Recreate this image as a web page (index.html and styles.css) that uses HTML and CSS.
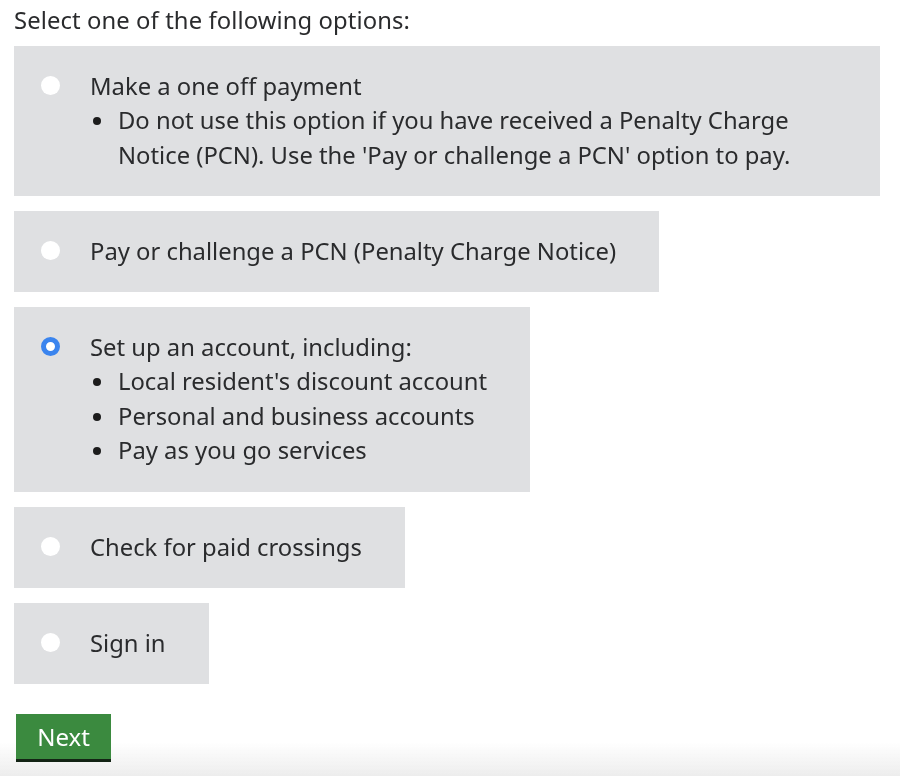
FILE: index.html
```html
<!DOCTYPE html>
<html lang="en">
<head>
<meta charset="utf-8">
<title>Select an option</title>
<link rel="stylesheet" href="styles.css">
</head>
<body>
<main class="page">
  <p class="legend">Select one of the following options:</p>
  <div class="options">
    <label class="option option-wide">
      <span class="radio"></span>
      <span class="body">
        <span class="title">Make a one off payment</span>
        <ul class="bullets">
          <li>Do not use this option if you have received a Penalty Charge Notice (PCN). Use the 'Pay or challenge a PCN' option to pay.</li>
        </ul>
      </span>
    </label>
    <label class="option">
      <span class="radio"></span>
      <span class="body"><span class="title">Pay or challenge a PCN (Penalty Charge Notice)</span></span>
    </label>
    <label class="option">
      <span class="radio checked"></span>
      <span class="body">
        <span class="title">Set up an account, including:</span>
        <ul class="bullets">
          <li>Local resident's discount account</li>
          <li>Personal and business accounts</li>
          <li>Pay as you go services</li>
        </ul>
      </span>
    </label>
    <label class="option">
      <span class="radio"></span>
      <span class="body"><span class="title">Check for paid crossings</span></span>
    </label>
    <label class="option">
      <span class="radio"></span>
      <span class="body"><span class="title">Sign in</span></span>
    </label>
  </div>
  <button class="next" type="button">Next</button>
</main>
<div class="fade"></div>
</body>
</html>
```
FILE: styles.css
```css
* { box-sizing: border-box; }
html { margin: 0; padding: 0; background: #fff; }
body {
  margin: 0;
  padding: 0;
  background: transparent;
  font-family: "Noto Sans", "Open Sans", sans-serif;
  color: #2a2b2d;
  font-size: 23.8px;
}
.page {
  padding: 4px 20px 0 14px;
}
.legend {
  margin: 0;
  font-size: 23.8px;
  line-height: 32px;
  letter-spacing: 0.1px;
}
.options {
  display: flex;
  flex-direction: column;
  align-items: flex-start;
  gap: 15px;
  margin-top: 10px;
}
.option {
  display: flex;
  align-items: flex-start;
  background: #dfe0e2;
  padding: 23px 43px 24px 27px;
  max-width: 866px;
}
.option-wide { width: 866px; }
.radio {
  flex: none;
  width: 19px;
  height: 19px;
  border-radius: 50%;
  background: #fff;
  margin-top: 7px;
  margin-right: 30px;
}
.radio.checked {
  background: #fff;
  border: 5px solid #3a84ee;
}
.body { display: block; }
.title {
  display: block;
  line-height: 34px;
}
.bullets {
  list-style: none;
  margin: 0;
  padding: 0;
}
.bullets li {
  position: relative;
  padding-left: 28px;
  line-height: 34.5px;
}
.bullets li::before {
  content: "";
  position: absolute;
  left: 3px;
  top: 14px;
  width: 8px;
  height: 8px;
  border-radius: 50%;
  background: #1c1c1c;
}
.next {
  display: block;
  margin-top: 30px;
  margin-left: 2px;
  width: 95px;
  height: 48px;
  background: #3b8a3f;
  color: #fff;
  border: 0;
  border-bottom: 3px solid #142415;
  font-family: "Noto Sans", "Open Sans", sans-serif;
  font-size: 24px;
  padding: 0;
}
.fade {
  position: fixed;
  z-index: -1;
  left: 0;
  right: 0;
  bottom: 0;
  height: 34px;
  background: linear-gradient(to bottom, rgba(235,235,235,0), rgba(235,235,235,0.9));
  pointer-events: none;
}
```
